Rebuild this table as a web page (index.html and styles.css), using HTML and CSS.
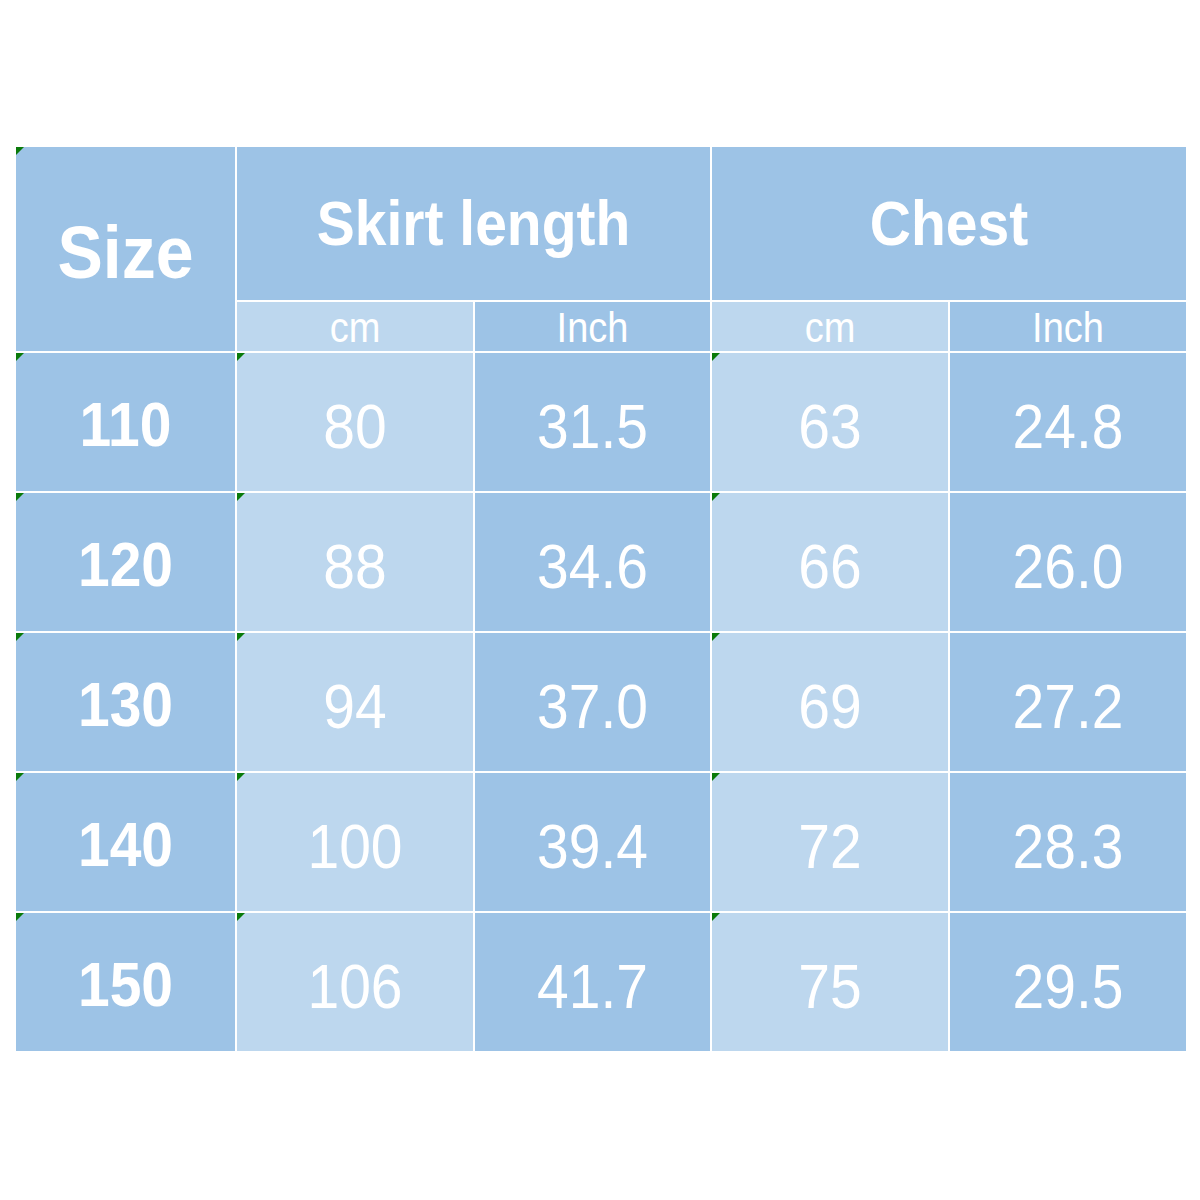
FILE: index.html
```html
<!DOCTYPE html>
<html>
<head>
<meta charset="utf-8">
<link rel="stylesheet" href="styles.css">
</head>
<body>
<div class="table">
  <div class="cell dark head size-head mark"><span class="t">Size</span></div>
  <div class="cell dark head span2"><span class="t">Skirt length</span></div>
  <div class="cell dark head span2"><span class="t">Chest</span></div>
  <div class="cell light sub"><span class="t">cm</span></div>
  <div class="cell dark sub"><span class="t">Inch</span></div>
  <div class="cell light sub"><span class="t">cm</span></div>
  <div class="cell dark sub"><span class="t">Inch</span></div>

  <div class="cell dark num mark"><span class="t">110</span></div>
  <div class="cell light val mark"><span class="t">80</span></div>
  <div class="cell dark val"><span class="t">31.5</span></div>
  <div class="cell light val mark"><span class="t">63</span></div>
  <div class="cell dark val"><span class="t">24.8</span></div>

  <div class="cell dark num mark"><span class="t">120</span></div>
  <div class="cell light val mark"><span class="t">88</span></div>
  <div class="cell dark val"><span class="t">34.6</span></div>
  <div class="cell light val mark"><span class="t">66</span></div>
  <div class="cell dark val"><span class="t">26.0</span></div>

  <div class="cell dark num mark"><span class="t">130</span></div>
  <div class="cell light val mark"><span class="t">94</span></div>
  <div class="cell dark val"><span class="t">37.0</span></div>
  <div class="cell light val mark"><span class="t">69</span></div>
  <div class="cell dark val"><span class="t">27.2</span></div>

  <div class="cell dark num mark"><span class="t">140</span></div>
  <div class="cell light val mark"><span class="t">100</span></div>
  <div class="cell dark val"><span class="t">39.4</span></div>
  <div class="cell light val mark"><span class="t">72</span></div>
  <div class="cell dark val"><span class="t">28.3</span></div>

  <div class="cell dark num mark"><span class="t">150</span></div>
  <div class="cell light val mark"><span class="t">106</span></div>
  <div class="cell dark val"><span class="t">41.7</span></div>
  <div class="cell light val mark"><span class="t">75</span></div>
  <div class="cell dark val"><span class="t">29.5</span></div>
</div>
</body>
</html>
```

FILE: styles.css
```css
html, body {
  margin: 0;
  padding: 0;
  background: #ffffff;
}

body {
  font-family: "Liberation Sans", Arial, sans-serif;
  color: #ffffff;
}

.table {
  margin: 147px 0 0 16px;
  width: 1170px;
  display: grid;
  grid-template-columns: 219px 236px 235px 236px 236px;
  grid-template-rows: 153px 49px repeat(5, 138px);
  gap: 2px;
  background: #ffffff;
}

.cell {
  position: relative;
  display: flex;
  align-items: center;
  justify-content: center;
  line-height: 1;
}

.t {
  display: inline-block;
  transform: scaleY(1.1);
}

.dark {
  background: #9dc3e6;
}

.light {
  background: #bdd7ee;
}

.size-head {
  grid-row: span 2;
}

.span2 {
  grid-column: span 2;
}

.head {
  font-weight: bold;
  font-size: 57px;
}

.size-head {
  font-size: 68px;
  padding-top: 6px;
}

.sub {
  font-size: 38px;
  padding-top: 2px;
}

.num {
  font-weight: bold;
  font-size: 57px;
  padding-top: 4px;
}

.val {
  font-size: 57px;
  padding-top: 8px;
}

.mark::before {
  content: "";
  position: absolute;
  left: 0;
  top: 0;
  width: 0;
  height: 0;
  border-top: 8px solid #0a7a0a;
  border-right: 8px solid transparent;
}
```
